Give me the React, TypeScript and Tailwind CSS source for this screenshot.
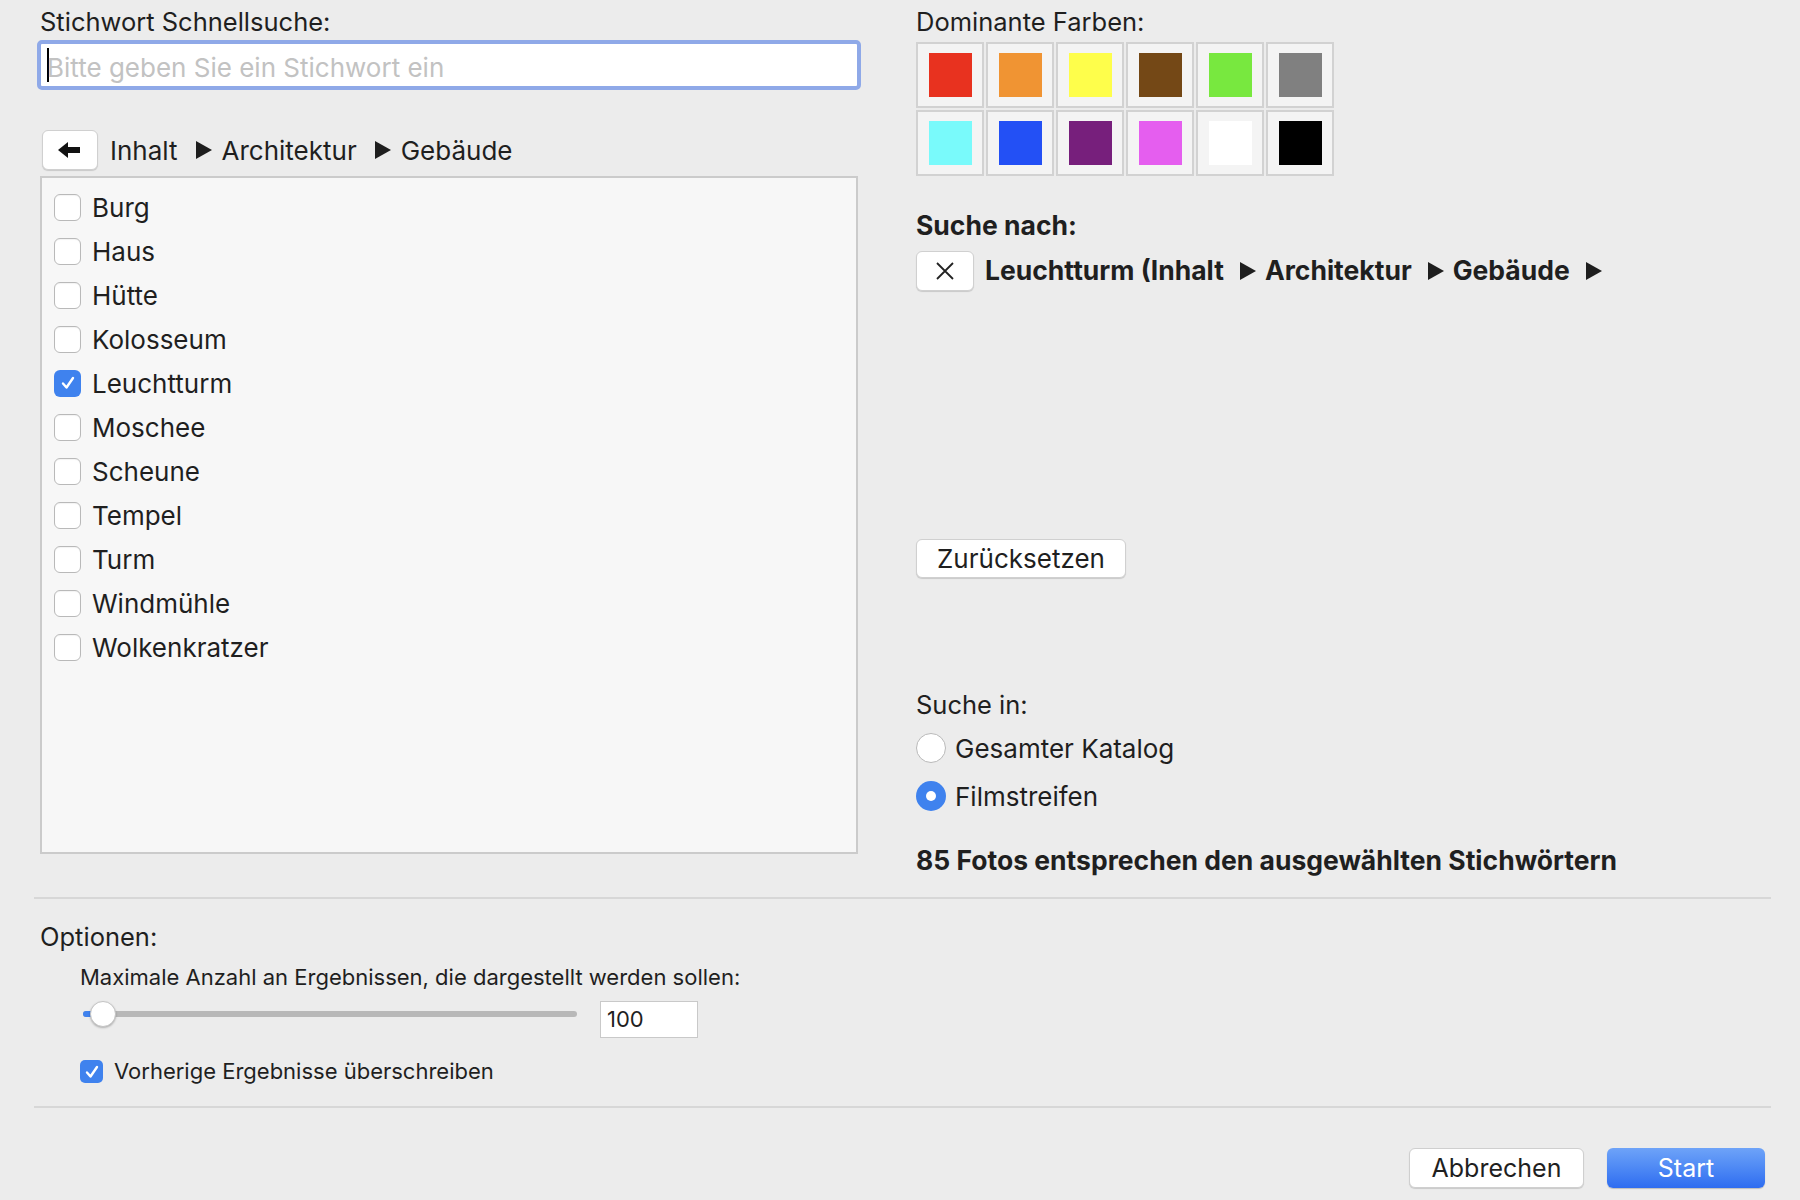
import { useState } from "react";

const items = [
  "Burg",
  "Haus",
  "Hütte",
  "Kolosseum",
  "Leuchtturm",
  "Moschee",
  "Scheune",
  "Tempel",
  "Turm",
  "Windmühle",
  "Wolkenkratzer",
];

const swatches = [
  "bg-[#e8321f]",
  "bg-[#f09433]",
  "bg-[#fefe4b]",
  "bg-[#744816]",
  "bg-[#78e83f]",
  "bg-[#808080]",
  "bg-[#79fafb]",
  "bg-[#2350f5]",
  "bg-[#771f7c]",
  "bg-[#e55eef]",
  "bg-[#ffffff]",
  "bg-[#000000]",
];

const Triangle = () => (
  <svg width="16" height="18" viewBox="0 0 16 18">
    <path d="M0 0 L16 9 L0 18 Z" fill="#1e1e1e" />
  </svg>
);

const CheckMark = () => (
  <svg width="16" height="16" viewBox="0 0 16 16">
    <path d="M3 8.5 L6.5 12.5 L13 3" stroke="white" strokeWidth="2.4" fill="none" strokeLinecap="round" strokeLinejoin="round" />
  </svg>
);

const Checkbox = ({ checked, small }: { checked: boolean; small?: boolean }) => (
  <div
    className={
      (small ? "w-[23px] h-[23px] rounded-[5px] " : "w-[27px] h-[27px] rounded-[6px] ") +
      (checked
        ? "bg-[#3f82ee] flex items-center justify-center"
        : "bg-white border border-[#b9b9b9] shadow-[inset_0_1px_1px_rgba(0,0,0,0.05)]")
    }
  >
    {checked && <CheckMark />}
  </div>
);

const App = () => {
  const [selected, setSelected] = useState<string[]>(["Leuchtturm"]);
  const [scope, setScope] = useState("film");
  const [overwrite, setOverwrite] = useState(true);

  const toggle = (name: string) =>
    setSelected((s) => (s.includes(name) ? s.filter((x) => x !== name) : [...s, name]));

  return (
    <div
      className="w-[1800px] h-[1200px] overflow-hidden bg-[#ececec] text-[#1f1f1f]"
      style={{ fontFamily: "Inter, 'Liberation Sans', sans-serif" }}
    >
      {/* Top area */}
      <div className="flex pt-[7px]">
        {/* Left column */}
        <div className="w-[818px] ml-[40px] flex flex-col">
          <div className="text-[25.5px] leading-[30px]">Stichwort Schnellsuche:</div>
          <div className="mt-[3px] -mx-[3px] h-[50px] rounded-[5px] border-[4px] border-[#8fa9e8] bg-white flex items-center pl-[6px]">
            <div className="w-[2px] h-[34px] bg-black" />
            <span className="text-[26px] text-[#c2c2c2] -ml-[2px] pt-[5px]">Bitte geben Sie ein Stichwort ein</span>
          </div>

          <div className="mt-[40px] flex items-center h-[40px] pl-[2px]">
            <div className="w-[56px] h-[40px] bg-white rounded-[6px] border border-[#d0d0d0] shadow-[0_1px_1px_rgba(0,0,0,0.15)] flex items-center justify-center">
              <svg width="24" height="18" viewBox="0 0 24 18">
                <path d="M0 9 L10 1 L10 6 L22 6 L22 12 L10 12 L10 17 Z" fill="#111" />
              </svg>
            </div>
            <span className="text-[26px] ml-[12px]">Inhalt</span>
            <span className="ml-[18px]"><Triangle /></span>
            <span className="text-[26px] ml-[10px]">Architektur</span>
            <span className="ml-[18px]"><Triangle /></span>
            <span className="text-[26px] ml-[10px]">Gebäude</span>
          </div>

          <div className="mt-[6px] h-[678px] bg-[#f7f7f7] border-2 border-[#cbcbcb] pt-[7px] pl-[12px]">
            {items.map((name) => (
              <div
                key={name}
                className="h-[44px] flex items-center gap-[11px] cursor-default"
                onClick={() => toggle(name)}
              >
                <Checkbox checked={selected.includes(name)} />
                <span className="text-[26px]">{name}</span>
              </div>
            ))}
          </div>
        </div>

        {/* Right column */}
        <div className="ml-[58px] flex flex-col">
          <div className="text-[25.5px] leading-[30px]">Dominante Farben:</div>
          <div className="mt-[5px] grid grid-cols-6 gap-[2px] w-[418px]">
            {swatches.map((c, i) => (
              <div
                key={i}
                className="h-[66px] bg-[#f4f4f4] border-2 border-[#d2d2d2] flex items-center justify-center"
              >
                <div className={"w-[43px] h-[44px] " + c} />
              </div>
            ))}
          </div>

          <div className="mt-[34px] text-[26.5px] leading-[30px] font-bold">Suche nach:</div>
          <div className="mt-[11px] flex items-center h-[40px]">
            <div className="w-[58px] h-[40px] bg-white rounded-[6px] border border-[#d0d0d0] shadow-[0_1px_1px_rgba(0,0,0,0.15)] flex items-center justify-center">
              <svg width="20" height="20" viewBox="0 0 20 20">
                <path d="M2 2 L18 18 M18 2 L2 18" stroke="#222" strokeWidth="1.8" />
              </svg>
            </div>
            <span className="ml-[11px] text-[26.5px] font-bold">Leuchtturm (Inhalt</span>
            <span className="ml-[16px]"><Triangle /></span>
            <span className="ml-[9px] text-[26.5px] font-bold">Architektur</span>
            <span className="ml-[16px]"><Triangle /></span>
            <span className="ml-[9px] text-[26.5px] font-bold">Gebäude</span>
            <span className="ml-[16px]"><Triangle /></span>
          </div>

          <div className="mt-[248px]">
            <button className="h-[39px] px-[20px] bg-white rounded-[6px] border border-[#d0d0d0] shadow-[0_1px_1px_rgba(0,0,0,0.15)] text-[26px] leading-none">
              Zurücksetzen
            </button>
          </div>

          <div className="mt-[112px] text-[25.5px] leading-[30px]">Suche in:</div>
          <div className="mt-[13px] flex flex-col gap-[18px]">
            {[
              { id: "all", label: "Gesamter Katalog" },
              { id: "film", label: "Filmstreifen" },
            ].map((r) => (
              <div key={r.id} className="flex items-center h-[30px]" onClick={() => setScope(r.id)}>
                {scope === r.id ? (
                  <div className="w-[30px] h-[30px] rounded-full bg-[#3f82ee] flex items-center justify-center">
                    <div className="w-[10px] h-[10px] rounded-full bg-white" />
                  </div>
                ) : (
                  <div className="w-[30px] h-[30px] rounded-full bg-white border border-[#b9b9b9]" />
                )}
                <span className="ml-[9px] text-[26px]">{r.label}</span>
              </div>
            ))}
          </div>

          <div className="mt-[34px] text-[26.5px] leading-[30px] font-bold">
            85 Fotos entsprechen den ausgewählten Stichwörtern
          </div>
        </div>
      </div>

      {/* Separator */}
      <div className="mt-[22px] ml-[34px] w-[1737px] h-[2px] bg-[#d7d7d7]" />

      {/* Options */}
      <div className="pl-[40px] pt-[23px]">
        <div className="text-[25.5px] leading-[30px]">Optionen:</div>
        <div className="pl-[40px]">
          <div className="mt-[12px] text-[22px] leading-[26px]">
            Maximale Anzahl an Ergebnissen, die dargestellt werden sollen:
          </div>
          <div className="mt-[11px] flex items-start">
            <div className="h-[26px] flex items-center ml-[3px]">
              <div className="relative w-[494px] h-[6px] rounded-full bg-[#b8b8b8]">
                <div className="absolute left-0 top-0 h-[6px] w-[20px] rounded-full bg-[#3f82ee]" />
                <div className="absolute left-[7px] -top-[10px] w-[26px] h-[26px] rounded-full bg-white border border-[#c4c4c4] shadow-[0_1px_2px_rgba(0,0,0,0.25)]" />
              </div>
            </div>
            <div className="ml-[23px] w-[98px] h-[37px] bg-white border border-[#c9c9c9] flex items-center pl-[6px] text-[22px]">
              100
            </div>
          </div>
          <div className="mt-[17px] flex items-center gap-[11px]" onClick={() => setOverwrite(!overwrite)}>
            <Checkbox checked={overwrite} small />
            <span className="text-[22px]">Vorherige Ergebnisse überschreiben</span>
          </div>
        </div>
      </div>

      <div className="mt-[18px] ml-[34px] w-[1737px] h-[2px] bg-[#d7d7d7]" />

      {/* Buttons */}
      <div className="mt-[40px] flex justify-end pr-[35px] gap-[23px]">
        <button className="w-[175px] h-[40px] bg-white rounded-[6px] border border-[#cfcfcf] shadow-[0_1px_1px_rgba(0,0,0,0.15)] text-[25px] leading-none">
          Abbrechen
        </button>
        <button className="w-[158px] h-[40px] rounded-[6px] bg-gradient-to-b from-[#6ea3f8] to-[#2e6cf0] text-white text-[25px] leading-none shadow-[0_1px_1px_rgba(0,0,0,0.2)]">
          Start
        </button>
      </div>
    </div>
  );
};

export default App;
